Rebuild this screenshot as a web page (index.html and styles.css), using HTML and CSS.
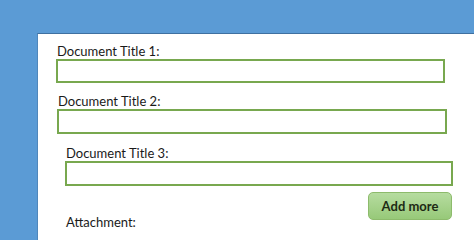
FILE: index.html
```html
<!DOCTYPE html>
<html>
<head>
<meta charset="utf-8">
<link rel="stylesheet" href="styles.css">
</head>
<body>
<div class="panel">
  <div class="field f1">
    <label class="label">Document Title 1:</label>
    <div class="input"></div>
  </div>
  <div class="field f2">
    <label class="label">Document Title 2:</label>
    <div class="input"></div>
  </div>
  <div class="field f3">
    <label class="label">Document Title 3:</label>
    <div class="input"></div>
  </div>
  <div class="actions">
    <button class="btn">Add more</button>
  </div>
  <div class="field f3 next">
    <label class="label">Attachment:</label>
  </div>
</div>
</body>
</html>
```
FILE: styles.css
```css
html, body {
  margin: 0;
  padding: 0;
  height: 100%;
  overflow: hidden;
  background: #5b9bd5;
  font-family: Lato, "Open Sans", sans-serif;
}
body {
  box-sizing: border-box;
  padding: 33px 0 0 37px;
  display: flex;
  flex-direction: column;
}
.panel {
  flex: 1;
  background: #ffffff;
  border-top: 1px solid #3f70a0;
  border-left: 1px solid #5087bb;
  padding-top: 9px;
  overflow: hidden;
  display: flex;
  flex-direction: column;
}
.field {
  display: flex;
  flex-direction: column;
  flex-shrink: 0;
}
.f1 { margin-left: 18px; width: 389px; }
.f2 { margin-left: 19px; width: 390px; margin-top: 10px; }
.f3 { margin-left: 27px; width: 388px; margin-top: 11px; }
.label {
  font-size: 13px;
  line-height: 16px;
  color: #1a1a1a;
  padding-left: 1px;
}
.input {
  box-sizing: border-box;
  height: 24px;
  border: 2px solid #78a84f;
  background: #fff;
}
.f2 .input, .f3 .input { height: 25px; }
.actions {
  display: flex;
  justify-content: flex-end;
  flex-shrink: 0;
  width: 414px;
  margin-top: 6px;
  margin-bottom: -6px;
}
.btn {
  width: 84px;
  height: 28px;
  border-radius: 5px;
  border: 1px solid #8dbb6c;
  background: linear-gradient(#b6dca0, #97c979);
  font-family: Lato, "Open Sans", sans-serif;
  font-weight: bold;
  font-size: 13px;
  color: #1d2a14;
  padding: 0;
}
.next { margin-top: 0; }
```
